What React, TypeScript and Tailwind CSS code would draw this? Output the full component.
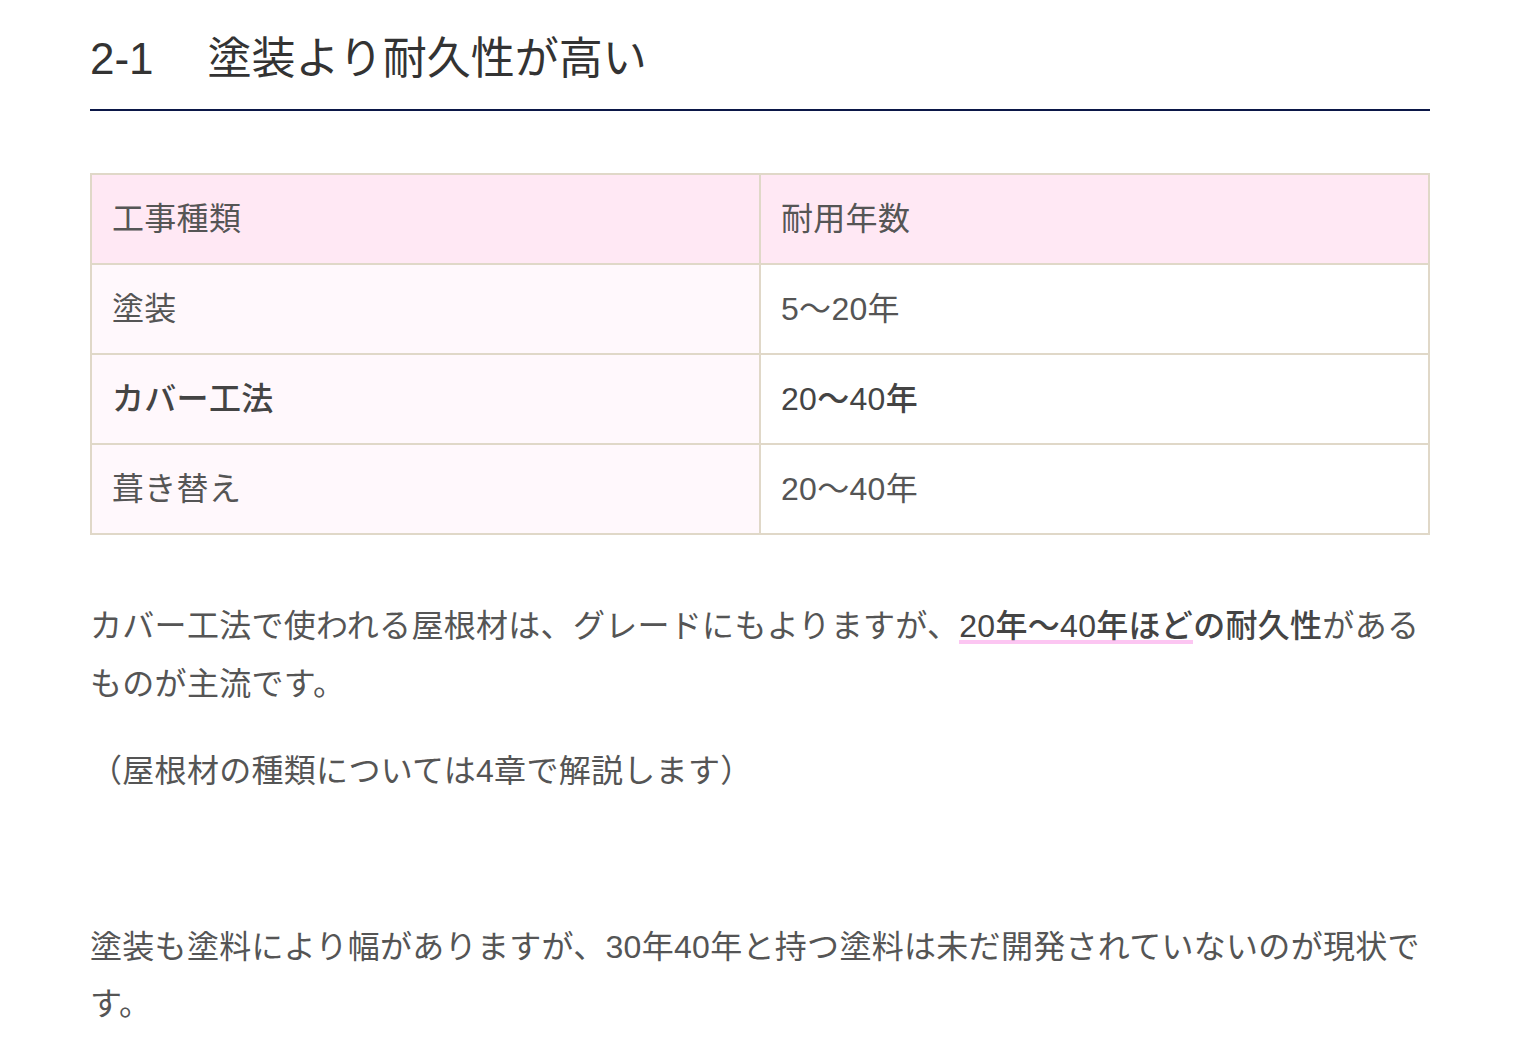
const rows = [
  { kind: '塗装', years: '5～20年', strong: false },
  { kind: 'カバー工法', years: '20～40年', strong: true },
  { kind: '葺き替え', years: '20～40年', strong: false },
]

const font = { fontFamily: '"Liberation Sans", "Noto Sans CJK JP", sans-serif' }

export default function App() {
  return (
    <div className="min-h-[1042px] bg-white px-[90px] text-[#555] tracking-[0.3px]" style={font}>
      {/* section heading */}
      <h2 className="border-b-2 border-[#0b1748] pt-[30px] pb-[22px] text-[44px] leading-[1.3] tracking-normal text-[#333]">
        2-1<span className="ml-[54px]">塗装より耐久性が高い</span>
      </h2>

      {/* durability table */}
      <table className="mt-[62px] w-full border-collapse border-2 border-[#e0d8c8] text-[32px]">
        <thead>
          <tr className="bg-[#ffe8f4]">
            <th className="h-[90px] w-1/2 border-2 border-[#e0d8c8] px-[20px] text-left font-normal">工事種類</th>
            <th className="h-[90px] w-1/2 border-2 border-[#e0d8c8] px-[20px] text-left font-normal">耐用年数</th>
          </tr>
        </thead>
        <tbody>
          {rows.map((row) => (
            <tr key={row.kind} className={row.strong ? 'font-medium text-[#444]' : ''}>
              <td className="h-[90px] border-2 border-[#e0d8c8] bg-[#fff8fc] px-[20px]">{row.kind}</td>
              <td className="h-[90px] border-2 border-[#e0d8c8] bg-white px-[20px]">{row.years}</td>
            </tr>
          ))}
        </tbody>
      </table>

      <div className="mt-[63px] text-[32px] leading-[1.8]">
        <p className="mb-[30px]">
          カバー工法で使われる屋根材は、グレードにもよりますが、
          <span className="font-medium text-[#444]">
            <span className="bg-[linear-gradient(transparent_88%,#fcc6f2_88%)]">20年～40年ほど</span>の耐久性
          </span>
          がある
          <br />
          ものが主流です。
        </p>
        <p className="mb-[30px]">（屋根材の種類については4章で解説します）</p>
        <p className="mb-[30px]">&nbsp;</p>
        <p>
          塗装も塗料により幅がありますが、30年40年と持つ塗料は未だ開発されていないのが現状で
          <br />
          す。
        </p>
      </div>
    </div>
  )
}
